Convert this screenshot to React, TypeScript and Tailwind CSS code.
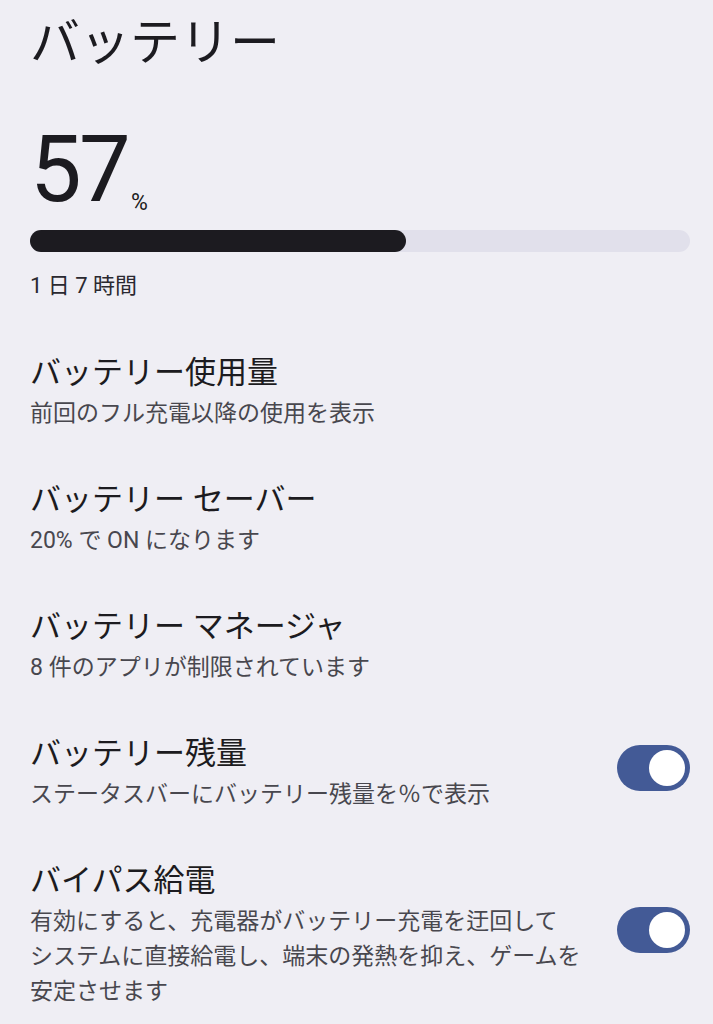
import React from "react";

const jp = "font-['Roboto','Noto_Sans_CJK_JP',sans-serif]";

type Item = { title: string; sub: string[]; toggle?: boolean };

const items: Item[] = [
  { title: "バッテリー使用量", sub: ["前回のフル充電以降の使用を表示"] },
  { title: "バッテリー セーバー", sub: ["20% で ON になります"] },
  { title: "バッテリー マネージャ", sub: ["8 件のアプリが制限されています"] },
  { title: "バッテリー残量", sub: ["ステータスバーにバッテリー残量を％で表示"], toggle: true },
  {
    title: "バイパス給電",
    sub: [
      "有効にすると、充電器がバッテリー充電を迂回して",
      "システムに直接給電し、端末の発熱を抑え、ゲームを",
      "安定させます",
    ],
    toggle: true,
  },
];

function Toggle() {
  return (
    <div className="mb-[10px] flex h-[46px] w-[73px] shrink-0 items-center justify-end rounded-full bg-[#435a96] pr-[5px]">
      <div className="h-[36px] w-[36px] rounded-full bg-white" />
    </div>
  );
}

export default function App() {
  return (
    <div className={`min-h-[1024px] w-full overflow-hidden bg-[#efeef4] pl-[30px] pr-[23px] text-[#1c1b20] ${jp}`}>
      <h1 className="pt-[12px] text-[50px] font-normal leading-[62px]">バッテリー</h1>

      <div className="mt-[56px] flex items-end">
        <span className="text-[92px] leading-[80px] tracking-[-0.03em] font-['Roboto',sans-serif]">57</span>
        <span className="mb-[-4px] ml-[3px] text-[23px] leading-none font-['Roboto',sans-serif]">%</span>
      </div>

      <div className="mt-[20px] h-[22px] w-full rounded-full bg-[#e1e0eb]">
        <div className="h-full w-[57%] rounded-full bg-[#1c1b20]" />
      </div>

      <div className="mt-[19px] text-[22px] leading-[30px] text-[#2a2930]">1 日 7 時間</div>

      <div className="mt-[51px] flex flex-col gap-[48px]">
        {items.map((it) => (
          <div key={it.title} className="flex items-center justify-between">
            <div className="flex flex-col">
              <div className="text-[31px] leading-[42px]">{it.title}</div>
              <div className="mt-[2px] text-[23px] leading-[35px] text-[#48474e]">
                {it.sub.map((l) => (
                  <div key={l}>{l}</div>
                ))}
              </div>
            </div>
            {it.toggle && <Toggle />}
          </div>
        ))}
      </div>
    </div>
  );
}
